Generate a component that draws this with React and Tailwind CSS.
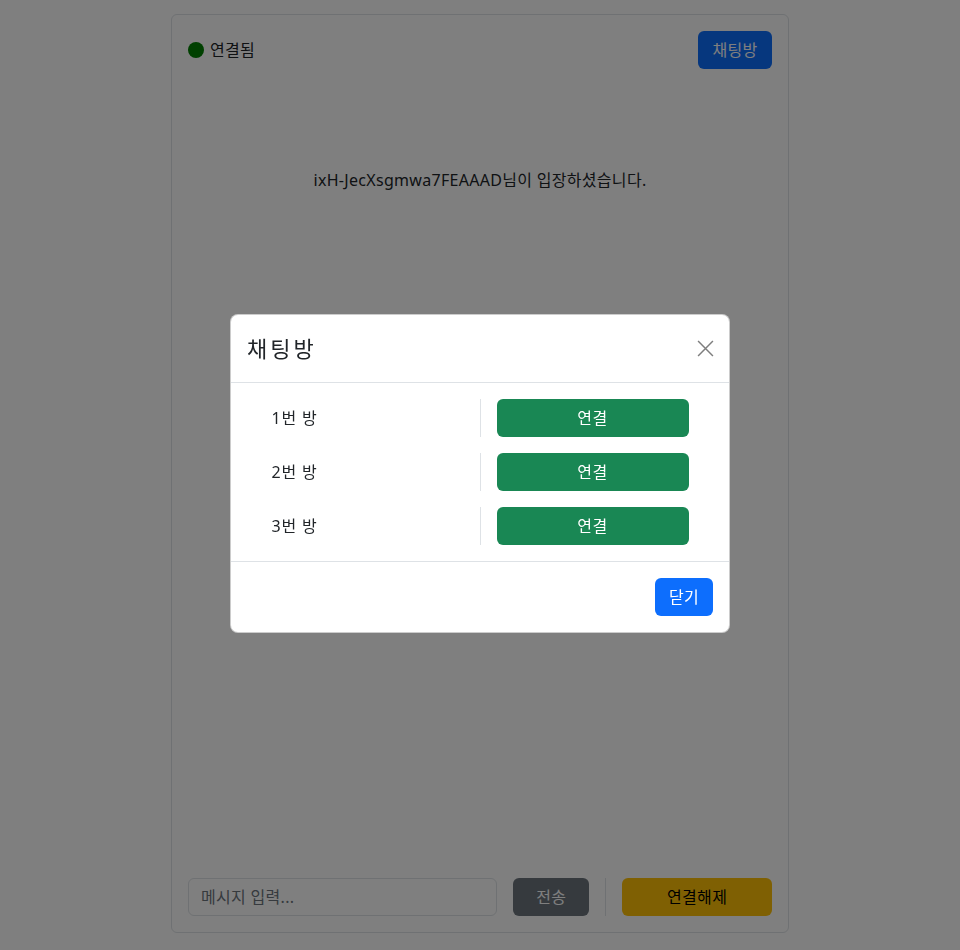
import React, { useState } from 'react';

const font = { fontFamily: '"Noto Sans", "Noto Sans CJK KR", sans-serif' };

function Room({ name }) {
  return (
    <div className="flex items-center justify-center">
      <div className="w-[192px] text-base tracking-[0.8px] text-[#212529]">{name}</div>
      <div className="mx-4 h-[38px] w-px bg-[#dee2e6]" />
      <button className="h-[38px] w-[192px] rounded-md bg-[#198754] text-base tracking-[0.5px] text-white">연결</button>
    </div>
  );
}

export default function App() {
  const [open, setOpen] = useState(true);
  const rooms = ['1번 방', '2번 방', '3번 방'];

  return (
    <div className="min-h-[950px] bg-white tracking-[0.3px] text-[#212529]" style={font}>
      <div className="mx-auto flex h-[919px] w-[618px] translate-y-[14px] flex-col rounded-md border border-[#dee2e6] p-4">
        <div className="flex items-center justify-between">
          <div className="flex items-center gap-[6px]">
            <span className="h-4 w-4 rounded-full bg-[#008000]" />
            <span className="text-base">연결됨</span>
          </div>
          <button className="h-[38px] w-[74px] rounded-md bg-[#0d6efd] text-base text-white">채팅방</button>
        </div>
        <div className="flex-1">
          <p className="mt-[99px] text-center text-base leading-6">ixH-JecXsgmwa7FEAAAD님이 입장하셨습니다.</p>
        </div>
        <div className="flex items-center">
          <input
            className="h-[38px] w-[310px] rounded-md border border-[#dee2e6] px-3 text-base outline-none placeholder:text-[#6c757d]"
            placeholder="메시지 입력..."
          />
          <button className="ml-4 h-[38px] w-[76px] rounded-md bg-[#6c757d] text-base text-white">전송</button>
          <div className="mx-4 h-[38px] w-px bg-[#dee2e6]" />
          <button className="h-[38px] w-[150px] rounded-md bg-[#ffc107] text-base text-black">연결해제</button>
        </div>
      </div>

      {open && (
        <div className="fixed inset-0 flex items-center justify-center bg-black/50">
          <div className="w-[500px] -translate-y-[2px] rounded-lg border border-black/20 bg-white">
            <div className="flex h-[68px] items-center justify-between border-b border-[#dee2e6] px-4">
              <h5 className="text-[22px] tracking-[3px] text-[#212529]">채팅방</h5>
              <button onClick={() => setOpen(false)} className="-mr-1 flex h-6 w-6 items-center justify-center opacity-50">
                <svg width="17" height="17" viewBox="0 0 16 16" fill="none" stroke="#000" strokeWidth="1.4">
                  <path d="M1 1l14 14M15 1L1 15" />
                </svg>
              </button>
            </div>
            <div className="flex flex-col gap-4 p-4">
              {rooms.map((r) => (
                <Room key={r} name={r} />
              ))}
            </div>
            <div className="flex justify-end border-t border-[#dee2e6] px-4 py-4">
              <button onClick={() => setOpen(false)} className="h-[38px] w-[58px] rounded-md bg-[#0d6efd] text-base text-white">
                닫기
              </button>
            </div>
          </div>
        </div>
      )}
    </div>
  );
}
